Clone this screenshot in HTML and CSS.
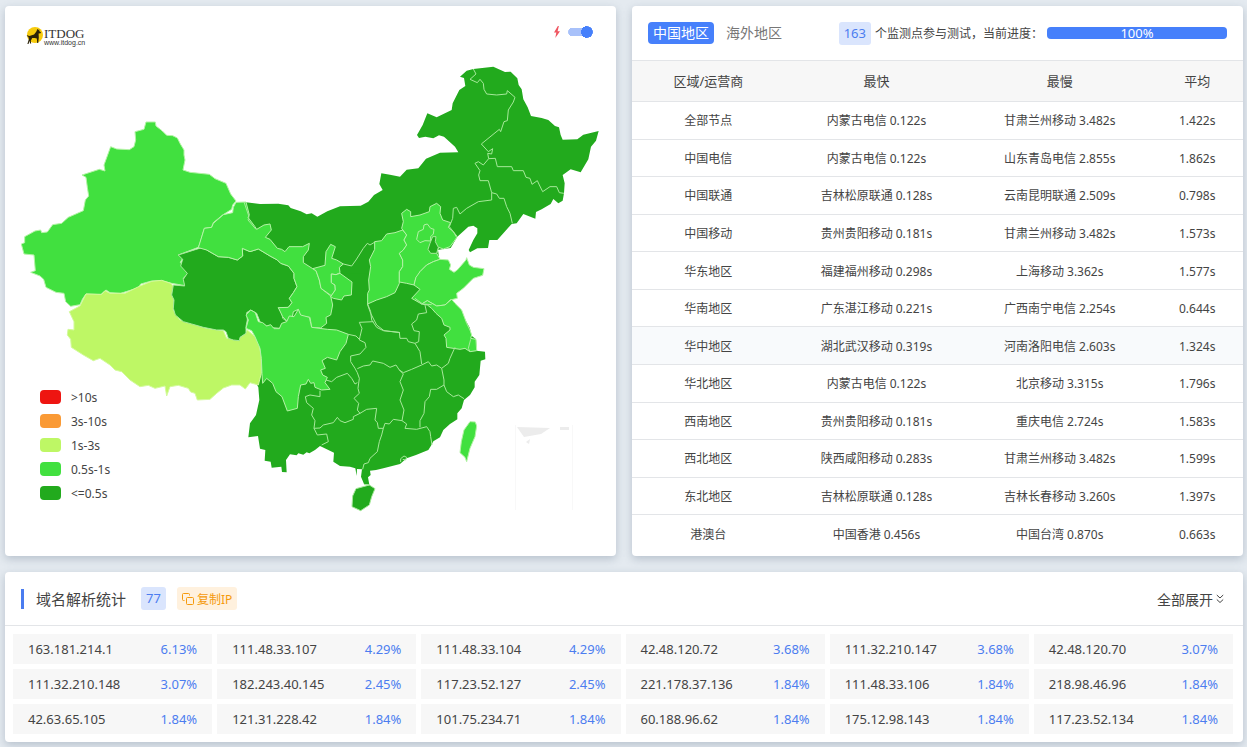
FILE: index.html
```html
<!DOCTYPE html>
<html lang="zh-CN">
<head>
<meta charset="utf-8">
<title>ITDOG</title>
<link rel="stylesheet" href="styles.css">
</head>
<body>
<main class="page">
  <section class="card map-card">
    <header class="map-head">
      <div class="logo">
        <svg class="logo-mark" viewBox="0 0 18 18" aria-hidden="true"><circle cx="9" cy="8.5" r="8" fill="#f7cb0c"/><path d="M11.6 2.2l.8 1.6.7-1.2.3 2.2 1.6 1-.5 1-1.9.2.2 4-.6 5.600h-1l-.4-4.600-2-.6-2.600.2-1.400 2.600.4 2.800h-1.200l-.5-2.800-1 3.300H1.400l1.500-5-.6-2.300-1.600-.7.500-.8 2.200.7 4.700-1.400 2.100-2.700z" fill="#2b2208"/></svg>
        <span class="logo-text"><b>ITDOG</b><small>www.itdog.cn</small></span>
      </div>
      <label class="switch">
        <svg class="bolt" viewBox="0 0 8 14" aria-hidden="true"><path d="M5 0L.5 7.500h2.700L2 14l5.500-8H4.700L6.200 0z" fill="#ef5560"/></svg>
        <input type="checkbox" checked aria-label="快速">
      </label>
    </header>
    <div class="map-body">
      <svg class="map" viewBox="5 60 611 496" role="img" aria-label="中国地图">
        <g transform="translate(0 100) scale(.333333)">
          <path class="good" d="M438 66L466 66 468 78 486 92 500 106 518 107 532 114 541 132 552 150 552 165 555 180 549 210 570 217 628 223 645 236 678 250 692 282 708 303 698 315 695 328 668 345 640 368 635 382 613 385 600 430 595 442 535 465 548 475 541 487 566 518 550 535 556 557 515 550 485 542 455 543 422 552 415 565 400 568 362 580 330 578 318 570 302 584 258 582 248 596 240 614 212 619 197 605 192 580 168 577 138 562 131 538 120 528 92 517 106 512 102 465 72 462 64 432 74 428 74 410 105 393 122 390 125 398 142 396 158 374 185 370 205 352 250 332 256 300 266 288 262 262 258 232 246 225 298 208 315 213 312 195 332 140 350 147 388 149 402 140 407 120 405 95 432 88z"/>
        </g>
        <g transform="translate(240 50) scale(.333333)">
          <path class="best plain" d="M12 456L60 462 115 461 145 466 152 474 182 484 200 493 215 490 232 500 262 484 300 469 362 467 385 455 402 435 428 420 418 402 424 370 450 374 480 380 500 359 535 355 558 326 600 308 655 307 645 290 612 260 597 256 580 265 556 260 537 264 531 255 548 225 562 190 590 202 635 180 638 160 658 120 676 108 672 84 660 80 680 62 700 57 760 50 795 66 812 65 832 85 836 105 845 118 850 148 863 172 873 198 905 204 925 210 945 228 957 232 962 255 968 269 1012 268 1030 254 1076 243 1068 272 1053 290 1045 328 1022 367 992 358 968 375 974 400 972 430 968 452 955 460 940 447 932 462 905 478 888 486 886 506 850 492 830 520 815 522 790 550 772 570 748 570 744 594 712 595 690 607 686 600 700 570 712 550 712 535 700 527 685 530 652 560 632 594 610 597 594 600 598 628 540 690 120 760 0 640z"/>
        </g>
        <g transform="translate(240 300) scale(.333333)">
          <path class="best plain" d="M80 -80L500 -80 640 5 665 40 690 85 692 105 708 118 710 152 735 155 736 178 722 182 718 225 704 245 704 262 690 285 672 300 665 325 652 340 652 358 630 372 610 390 600 412 580 424 573 437 565 450 528 465 500 475 480 492 430 505 408 510 390 512 392 525 384 532 388 554 372 552 363 530 366 508 351 507 350 528 346 505 330 500 300 498 280 485 282 458 265 450 240 438 225 450 208 460 200 457 190 464 175 460 170 466 150 463 138 480 140 517 126 516 124 500 95 503 92 485 74 482 76 450 60 446 54 408 25 412 30 370 48 345 58 300 55 262 46 245 70 200z"/>
        </g>
        <g transform="translate(60 270) scale(.333333)">
          <path class="fair" d="M78 72L125 73 135 62 150 70 195 70 240 48 275 34 305 31 332 40 342 50 336 70 342 90 340 120 360 150 400 162 440 175 490 182 500 205 530 208 550 195 562 180 585 200 598 225 604 260 604 310 595 345 570 338 556 357 540 345 515 345 490 354 470 370 450 388 412 390 405 370 392 366 385 355 355 346 330 350 320 378 315 348 285 355 265 346 240 350 210 330 185 305 165 300 150 285 120 265 100 272 70 255 34 232 32 208 22 195 24 178 42 180 42 155 28 125 60 108z"/>
        </g>
        <g transform="translate(160 180) scale(.333333)">
          <path class="best" d="M55 225L125 203 140 210 175 230 205 232 232 240 248 228 247 205 270 215 295 207 330 228 352 240 362 250 385 258 402 280 402 295 411 320 400 338 388 355 396 368 385 382 368 385 355 383 366 400 368 415 382 425 365 432 360 445 330 442 302 430 290 400 272 390 260 398 262 420 258 440 258 460 240 472 238 482 220 480 205 475 198 455 190 450 170 450 130 442 95 432 70 425 46 405 40 385 42 360 35 345 40 315 74 318 70 298 82 280 62 258 68 238z"/>
          <path class="good" d="M228 67L258 66 268 105 264 112 285 140 290 148 312 135 330 132 334 150 316 172 330 178 352 205 365 208 375 215 387 200 428 200 448 190 445 210 430 230 430 248 458 266 468 272 478 300 483 325 512 348 518 375 512 405 498 412 500 430 482 444 455 442 450 412 420 408 415 388 400 395 395 422 382 425 368 410 355 383 385 382 396 368 388 355 400 338 411 320 402 295 402 280 385 258 362 250 352 240 330 228 295 207 270 215 247 205 248 228 232 240 205 232 175 230 140 210 115 203 133 145 155 142 160 130 190 104 218 98 220 82z"/>
          <path class="good" d="M458 266L495 256 498 215 512 193 526 200 515 235 530 240 550 252 538 262 540 278 528 284 514 282 514 308 525 315 526 330 514 347 483 325 478 300 468 272z"/>
          <path class="good" d="M514 282L528 284 540 280 576 306 574 345 552 348 545 360 520 355 512 350 526 330 525 315 514 308z"/>
          <path class="edge" d="M550 252L575 258 588 240 610 205 622 190 630 195 645 186M622 372L632 400 650 435 672 452 720 458"/>
        </g>
        <g transform="translate(240 300) scale(.333333)">
          <path class="good" d="M18 85L25 60 18 45 32 30 46 38 55 65 68 68 80 78 92 74 102 86 118 86 125 70 140 65 148 48 162 50 175 28 182 45 208 52 215 82 262 88 290 90 325 103 318 130 300 155 290 180 262 172 246 182 256 205 242 210 248 225 262 232 255 248 270 268 245 270 225 262 222 248 212 250 205 238 198 252 182 255 175 290 172 325 142 333 126 290 108 275 98 250 80 235 68 250 66 220 64 175 60 145 45 110 35 92z"/>
        </g>
        <g transform="translate(340 190) scale(.333333)">
          <path class="good" d="M104 155L125 152 140 132 165 128 188 120 200 135 192 150 200 165 190 180 178 190 188 210 188 230 178 245 178 280 165 308 140 320 110 330 83 342 83 310 88 300 86 270 92 230 88 210 104 178z"/>
          <path class="good" d="M185 70L200 58 212 65 212 80 240 75 268 65 270 50 290 40 302 50 300 70 308 90 332 98 325 112 340 125 350 142 345 150 330 170 310 177 296 172 290 190 300 208 280 215 260 225 240 245 235 258 228 262 222 285 200 280 178 276 178 245 188 230 188 210 178 190 190 180 200 165 192 150 200 135 185 115 190 95z"/>
          <path class="good" d="M262 102L272 115 282 118 280 132 272 140 272 153 255 152 240 158 230 148 235 125 250 118 252 105z"/>
          <path class="best" d="M278 140L288 140 286 155 295 172 290 190 272 190 264 178 270 160z"/>
          <path class="good" d="M222 285L228 262 240 245 260 225 280 215 300 208 325 210 332 225 328 238 342 247 352 240 378 210 380 203 388 225 400 232 432 236 428 256 400 265 385 280 370 295 350 310 352 325 330 330 315 345 290 348 262 332 245 342 215 325 240 298z"/>
          <path class="good" d="M245 342L262 332 290 348 315 345 335 328 345 340 365 360 380 400 390 420 395 435 392 445 408 448 410 482 390 485 375 475 360 478 320 472 318 445 312 435 330 420 330 412 312 405 305 385 288 370 275 355 262 345z"/>
          <path class="edge" d="M392 448L385 475 390 485"/>
        </g>
        <g transform="translate(240 300) scale(.333333)">
          <path class="best" d="M338 588L348 566 388 555 405 566 395 590 388 615 362 632 336 620z"/>
          <path class="good" d="M690 365L706 366 710 378 705 410 690 445 680 485 675 472 660 458 664 425 672 390z"/>
          <path class="edge" d="M400 65L358 67 366 85 360 110 358 120 375 128 378 142 360 162 332 168 332 185 345 205 352 218M325 103L348 108 358 118M383 12L392 35 395 60 410 82 430 92 478 97 480 115 500 115 505 125 525 130M525 -5L548 12 575 14M555 15L560 38 535 42 530 60 515 72 522 92 538 95 536 125 525 130 540 155 545 192M352 206L370 198 390 195 398 183 430 190 450 202 468 195 478 210 490 218 515 208 545 195 565 185 575 198 590 195 605 205 625 190 630 175 645 142M605 205L612 240 612 255 620 275 640 290 655 285 672 296M612 255L590 268 572 268 568 290 555 305 552 340 540 362 540 382M478 210L490 222 480 245 490 270 480 300 492 330 486 362 500 372 495 385 530 388 560 380 570 395 572 410 576 435M486 362L460 358 448 372 435 370 430 385 415 385 412 368 405 360 410 325 380 328 360 340M352 218L358 235 354 265 358 280 342 295 356 310 352 330 360 340 340 350 340 358 315 368 300 362 292 352 280 368 250 375 240 384 222 385 225 362 215 345 220 325 200 308 196 290 210 285 240 290 240 272M258 240L275 245 290 232 322 220 335 235 345 252 352 248M222 385L232 405 260 402 265 425 245 435M430 385L425 405 418 425 412 455 390 475 385 488 372 492 368 508M482 486L482 476 492 468 500 472 497 480 488 478M388 555L372 553"/>
        </g>
        <g transform="translate(240 50) scale(.333333)">
          <path class="edge" d="M12 456L27 500 24 510 48 538M700 57L708 72 690 88 712 98 720 88 730 100 732 118 740 132 770 135 800 132 802 122 825 142 820 156 805 180 802 212 792 215 782 245 778 238 724 282 745 305 758 296 755 312 743 310 746 326 766 325 772 350 815 350 820 362 850 362 858 382 870 385 876 403 892 392 898 405 908 425 930 410 950 410 958 428 972 430M746 326L730 345 715 335 705 340 720 362 716 375 720 392 745 392 755 428 755 450 715 455 680 475 660 492 650 472 640 475 638 505 628 530 652 560M755 428L770 432 778 445 792 445 800 470 810 490 817 520"/>
        </g>
        <path class="islands" d="M517 427L550 428 541 434 524 437zM560 427h9v3h-9zM526 442l4-3-1 5z"/>
        <path class="inset" d="M515.500 425V510M572.500 425V510"/>
      </svg>
      <ul class="legend">
        <li><i class="swatch red"></i>&gt;10s</li>
        <li><i class="swatch orange"></i>3s-10s</li>
        <li><i class="swatch lime"></i>1s-3s</li>
        <li><i class="swatch green"></i>0.5s-1s</li>
        <li><i class="swatch dark"></i>&lt;=0.5s</li>
      </ul>
    </div>
  </section>

  <section class="card stats-card">
    <header class="stats-head">
      <nav class="tabs"><button class="tab active" type="button">中国地区</button><button class="tab" type="button">海外地区</button></nav>
      <div class="progress-info">
        <span class="badge">163</span>
        <span class="progress-text">个监测点参与测试，当前进度：</span>
        <div class="progress" role="progressbar" aria-label="当前进度" aria-valuenow="100"><div class="progress-fill" style="width:100%">100%</div></div>
      </div>
    </header>
    <div class="table-wrap">
      <table class="stats">
        <thead><tr><th>区域/运营商</th><th>最快</th><th>最慢</th><th>平均</th></tr></thead>
        <tbody>
          <tr><td>全部节点</td><td>内蒙古电信 0.122s</td><td>甘肃兰州移动 3.482s</td><td>1.422s</td></tr>
          <tr><td>中国电信</td><td>内蒙古电信 0.122s</td><td>山东青岛电信 2.855s</td><td>1.862s</td></tr>
          <tr><td>中国联通</td><td>吉林松原联通 0.128s</td><td>云南昆明联通 2.509s</td><td>0.798s</td></tr>
          <tr><td>中国移动</td><td>贵州贵阳移动 0.181s</td><td>甘肃兰州移动 3.482s</td><td>1.573s</td></tr>
          <tr><td>华东地区</td><td>福建福州移动 0.298s</td><td>上海移动 3.362s</td><td>1.577s</td></tr>
          <tr><td>华南地区</td><td>广东湛江移动 0.221s</td><td>广西南宁电信 2.254s</td><td>0.644s</td></tr>
          <tr class="current"><td>华中地区</td><td>湖北武汉移动 0.319s</td><td>河南洛阳电信 2.603s</td><td>1.324s</td></tr>
          <tr><td>华北地区</td><td>内蒙古电信 0.122s</td><td>北京移动 3.315s</td><td>1.796s</td></tr>
          <tr><td>西南地区</td><td>贵州贵阳移动 0.181s</td><td>重庆电信 2.724s</td><td>1.583s</td></tr>
          <tr><td>西北地区</td><td>陕西咸阳移动 0.283s</td><td>甘肃兰州移动 3.482s</td><td>1.599s</td></tr>
          <tr><td>东北地区</td><td>吉林松原联通 0.128s</td><td>吉林长春移动 3.260s</td><td>1.397s</td></tr>
          <tr><td>港澳台</td><td>中国香港 0.456s</td><td>中国台湾 0.870s</td><td>0.663s</td></tr>
        </tbody>
      </table>
    </div>
  </section>

  <section class="card dns-card">
    <header class="dns-head">
      <h2 class="dns-title">域名解析统计</h2>
      <span class="badge">77</span>
      <button class="copy" type="button"><svg class="copy-icon" viewBox="0 0 12 12" aria-hidden="true"><rect x="4.500" y="4.500" width="7" height="7" rx="1"/><path d="M2.500 7.500h-1a1 1 0 0 1-1-1v-5a1 1 0 0 1 1-1h5a1 1 0 0 1 1 1v1"/></svg>复制IP</button>
      <button class="expand" type="button">全部展开<svg class="chevrons" viewBox="0 0 8 10" aria-hidden="true"><path d="M.8 1L4 4 7.200 1M.8 5.500L4 8.500 7.200 5.500"/></svg></button>
    </header>
    <ul class="ips">
      <li><span>163.181.214.1</span><b>6.13%</b></li>
      <li><span>111.48.33.107</span><b>4.29%</b></li>
      <li><span>111.48.33.104</span><b>4.29%</b></li>
      <li><span>42.48.120.72</span><b>3.68%</b></li>
      <li><span>111.32.210.147</span><b>3.68%</b></li>
      <li><span>42.48.120.70</span><b>3.07%</b></li>
      <li><span>111.32.210.148</span><b>3.07%</b></li>
      <li><span>182.243.40.145</span><b>2.45%</b></li>
      <li><span>117.23.52.127</span><b>2.45%</b></li>
      <li><span>221.178.37.136</span><b>1.84%</b></li>
      <li><span>111.48.33.106</span><b>1.84%</b></li>
      <li><span>218.98.46.96</span><b>1.84%</b></li>
      <li><span>42.63.65.105</span><b>1.84%</b></li>
      <li><span>121.31.228.42</span><b>1.84%</b></li>
      <li><span>101.75.234.71</span><b>1.84%</b></li>
      <li><span>60.188.96.62</span><b>1.84%</b></li>
      <li><span>175.12.98.143</span><b>1.84%</b></li>
      <li><span>117.23.52.134</span><b>1.84%</b></li>
    </ul>
  </section>
</main>
</body>
</html>
```
FILE: styles.css
```css
* { box-sizing: border-box; }
body {
  margin: 0;
  background: #e4eaf0;
  color: #444;
  font-family: "Noto Sans", "Noto Sans CJK SC", sans-serif;
  font-size: 12px;
}
button { border: 0; margin: 0; padding: 0; background: none; font: inherit; color: inherit; cursor: pointer; }
ul { list-style: none; margin: 0; padding: 0; }

.page {
  display: grid;
  grid-template-columns: 1fr 1fr;
  gap: 16px;
  padding: 6px 4px 5px 5px;
}
.card {
  background: #fff;
  border-radius: 4px;
  box-shadow: 0 3px 8px rgba(90, 110, 130, .32);
  overflow: hidden;
  min-width: 0;
}

.map-head {
  display: flex;
  justify-content: space-between;
  height: 54px;
  padding: 20px 23px 0 21px;
}
.logo { display: flex; height: 20px; }
.logo-mark { width: 18px; height: 19px; }
.logo-text { display: flex; flex-direction: column; font-family: "Liberation Serif", serif; color: #333; padding-top: 2px; }
.logo-text b { font-size: 13px; line-height: 12px; font-weight: 400; }
.logo-text small { font-family: "Liberation Sans", sans-serif; font-size: 7px; line-height: 6px; }
.switch { display: flex; align-items: center; gap: 7px; height: 12px; }
.bolt { width: 8px; height: 12px; }
.switch input {
  appearance: none;
  width: 25px;
  height: 12px;
  margin: 0;
  border-radius: 6px;
  background:
    radial-gradient(circle at 19px 6px, #4680fb 6px, transparent 6px),
    radial-gradient(circle at 4px 6px, #a8c1fa 4px, transparent 4px),
    linear-gradient(#a8c1fa, #a8c1fa) 4px 2px / 15px 8px no-repeat;
}
.map-body { position: relative; }
.map { display: block; width: 100%; }
.map path { vector-effect: non-scaling-stroke; stroke-width: 1; stroke-linejoin: round; }
.map .good { fill: #41e03f; stroke: #b4f3a6; }
.map .best { fill: #22aa1d; stroke: #a6e99a; }
.map .fair { fill: #bef765; stroke: #d3fa9d; }
.map .plain { stroke: none; }
.map .edge { fill: none; stroke: #a6e99a; }
.map .islands { fill: #ececec; }
.map .inset { stroke: #f8f8f8; }

.legend { position: absolute; left: 35px; bottom: 51px; }
.legend li { display: flex; align-items: center; gap: 10px; height: 24px; }
.swatch { width: 21px; height: 14px; border-radius: 4px; }
.red { background: #ee1511; }
.orange { background: #fa9a35; }
.lime { background: #bef765; }
.green { background: #41e03f; }
.dark { background: #22aa1d; }

.stats-card { display: flex; flex-direction: column; }
.stats-head { display: flex; align-items: center; justify-content: space-between; height: 54px; padding: 0 16px; }
.tabs { display: flex; gap: 7px; }
.tab { height: 22px; padding: 0 5px; border-radius: 4px; font-size: 14px; line-height: 22px; color: #777; }
.tab.active { background: #4680fb; color: #fff; }
.progress-info { display: flex; align-items: center; gap: 4px; }
.badge { padding: 0 5px; border-radius: 3px; background: #dae5fd; color: #4c7df0; font-size: 13px; line-height: 23px; white-space: nowrap; }
.progress { width: 180px; height: 12px; border-radius: 4px; background: #e9ecef; }
.progress-fill { height: 12px; border-radius: 4px; background: #4680fb; color: #fff; text-align: center; font-size: 13px; line-height: 12px; }
.table-wrap { flex: 1; padding-bottom: 4px; }
.stats { width: 100%; height: 100%; border-collapse: collapse; table-layout: fixed; text-align: center; }
.stats th { width: 30%; height: 41px; padding: 0 0 2px; background: #f7f7f7; border-top: 1px solid #e3e5e8; font-size: 13px; font-weight: 400; }
.stats th:first-child { width: 25%; }
.stats th:last-child { width: 15%; }
.stats td { padding: 2px 0 0; border-top: 1px solid #e3e5e8; line-height: 34px; }
.stats .current { background: #f8fafc; }

.dns-card { grid-column: 1 / -1; }
.dns-head { display: flex; align-items: center; height: 54px; padding: 0 19px 0 16px; border-bottom: 1px solid #e3e5e8; }
.dns-title { margin: 0 15px 0 0; padding-left: 12px; border-left: 3px solid #4a7cf0; font-size: 15px; line-height: 20px; font-weight: 400; }
.copy { display: flex; align-items: center; gap: 3px; height: 23px; margin-left: 11px; padding: 0 5px; border-radius: 3px; background: #fff1de; color: #f59a0c; }
.copy-icon { width: 12px; height: 12px; fill: none; stroke: #f59a0c; }
.expand { display: flex; align-items: center; gap: 3px; margin-left: auto; font-size: 14px; }
.chevrons { width: 8px; height: 10px; fill: none; stroke: #444; }
.ips { display: grid; grid-template-columns: repeat(6, 1fr); gap: 5px; padding: 8px 10px 8px 8px; }
.ips li { display: flex; justify-content: space-between; padding: 0 15px; background: #f7f7f7; font-size: 13px; line-height: 30px; }
.ips b { font-weight: 400; color: #4c7df0; }
```
